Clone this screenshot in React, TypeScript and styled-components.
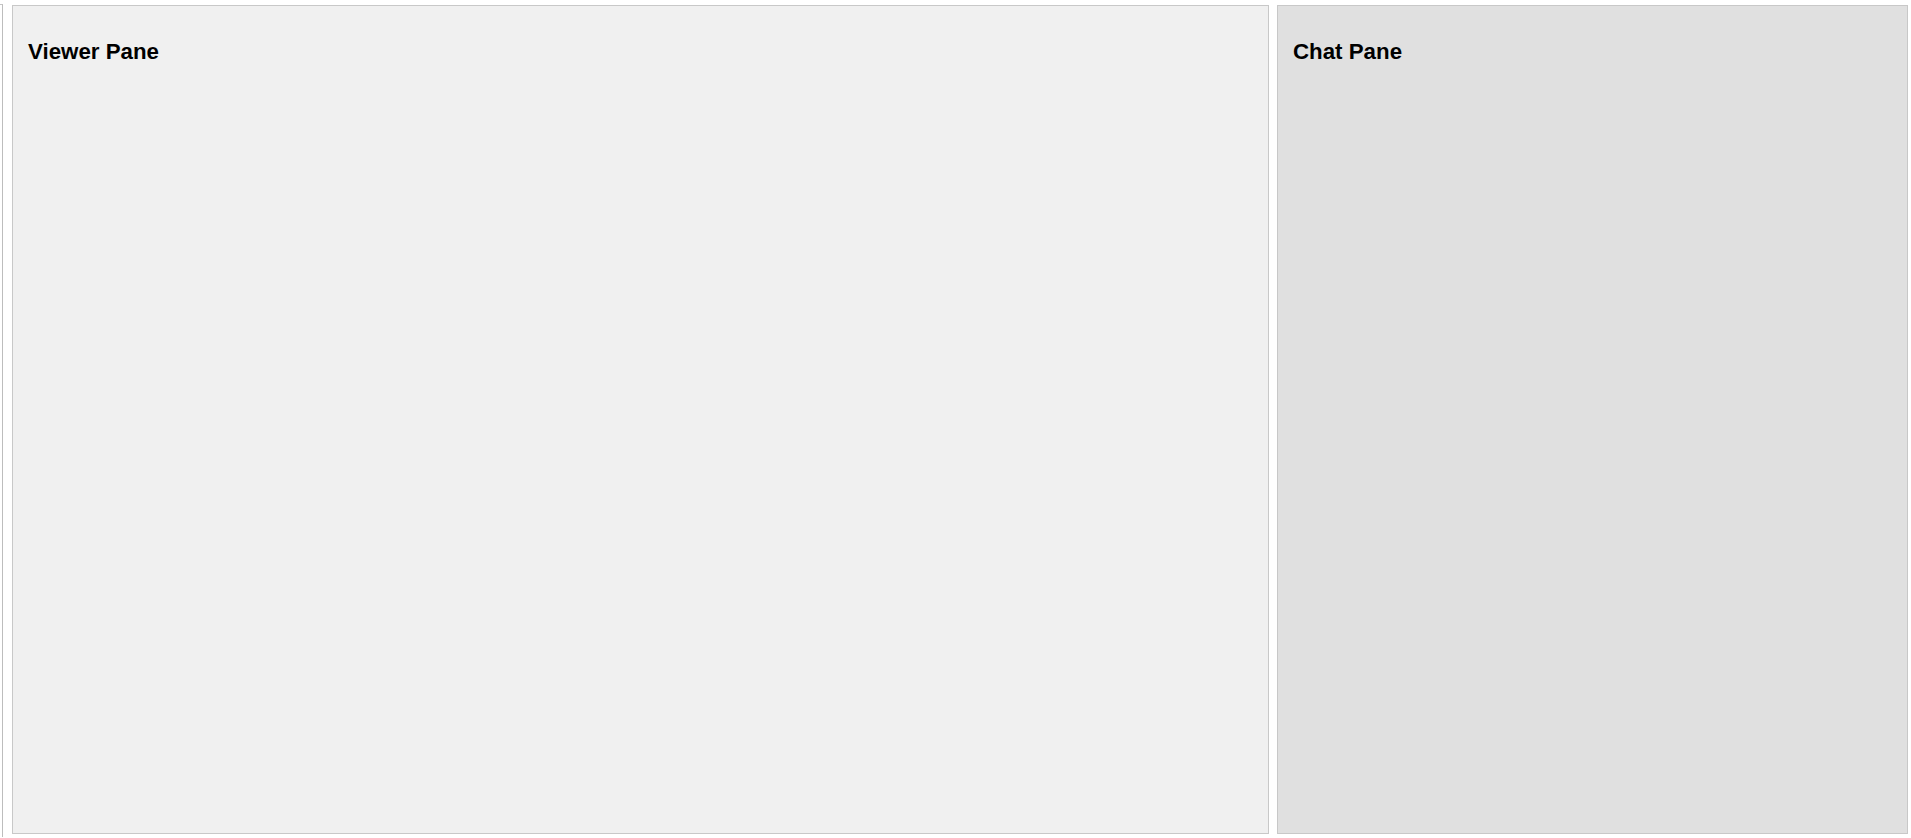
import React from 'react';
import styled, { createGlobalStyle } from 'styled-components';

const Global = createGlobalStyle`
  html, body {
    margin: 0;
    padding: 0;
    background: #fff;
    overflow: hidden;
  }
  body {
    font-family: "Liberation Sans", Arial, sans-serif;
  }
`

const Layout = styled.div`
  display: flex;
  gap: 8px;
  box-sizing: border-box;
  width: 1911px;
  height: 838px;
  padding: 5px 3px 4px 0;
`

const Collapsed = styled.div`
  flex: 0 0 3px;
  box-sizing: border-box;
  margin: -1px 1px -3px 0;
  border-top: 1px solid #c4c4c4;
  border-right: 1px solid #bdbdbd;
`

const Pane = styled.div<{ $bg: string; $grow?: boolean }>`
  box-sizing: border-box;
  flex: ${p => (p.$grow ? '1 1 auto' : '0 0 1257px')};
  padding: 0 15px;
  border: 1px solid #c8c8c8;
  background: ${p => p.$bg};
  overflow: hidden;
`

const Title = styled.h3`
  margin: 33px 0 0;
  font-size: 22.3px;
  font-weight: 700;
  line-height: normal;
  color: #000;
`

const App: React.FC = () => {
  return (
    <>
      <Global />
      <Layout>
        <Collapsed />
        <Pane $bg="#f0f0f0">
          <Title>Viewer Pane</Title>
        </Pane>
        <Pane $bg="#e0e0e0" $grow>
          <Title>Chat Pane</Title>
        </Pane>
      </Layout>
    </>
  )
}

export default App;
